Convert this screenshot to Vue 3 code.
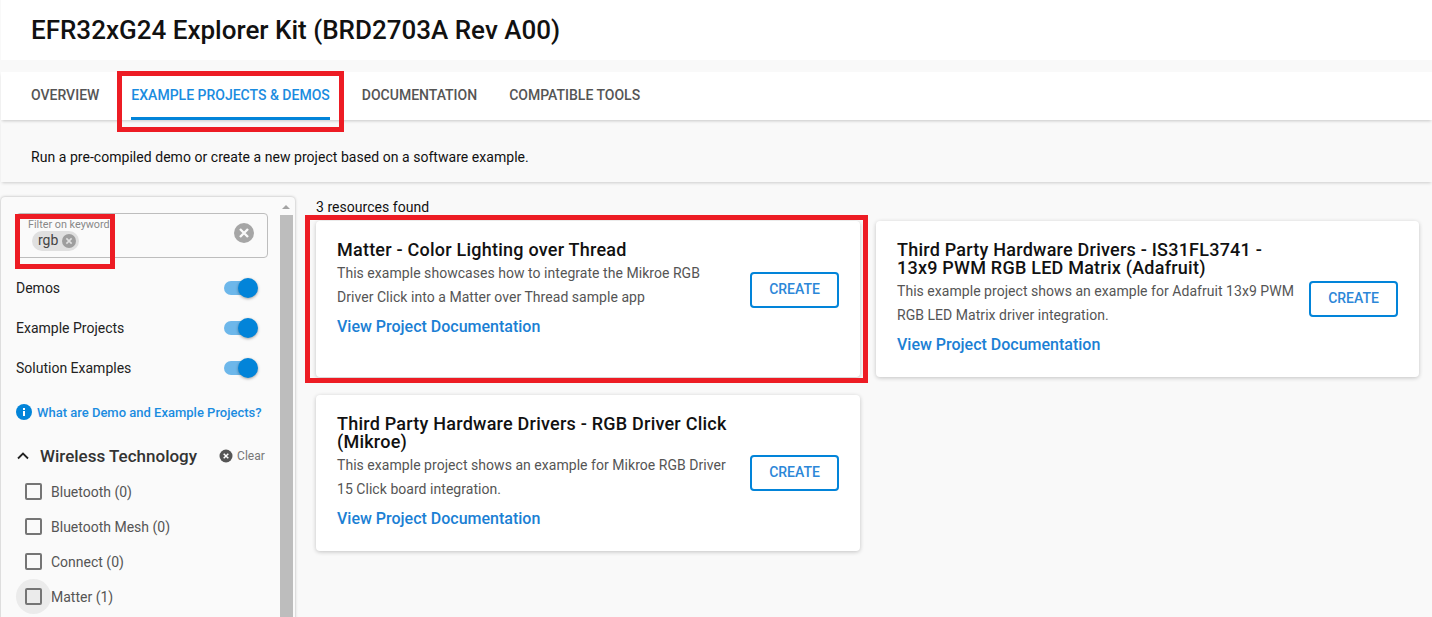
<template>
  <div class="page">
    <header class="title-bar">
      <h1>EFR32xG24 Explorer Kit (BRD2703A Rev A00)</h1>
    </header>

    <nav class="tabs">
      <a v-for="tab in tabs" :key="tab" class="tab" :class="{ active: tab === activeTab }">{{ tab }}</a>
    </nav>

    <p class="intro">Run a pre-compiled demo or create a new project based on a software example.</p>

    <div class="content">
      <aside class="sidebar">
        <div class="filters">
          <div class="keyword-box">
            <span class="keyword-label">Filter on keyword</span>
            <span class="chip">
              rgb
              <svg class="chip-x" viewBox="0 0 16 16">
                <circle cx="8" cy="8" r="8" fill="#9e9e9e" />
                <path d="M5 5l6 6M11 5l-6 6" stroke="#e0e0e0" stroke-width="1.8" />
              </svg>
            </span>
            <svg class="clear-all" viewBox="0 0 20 20">
              <circle cx="10" cy="10" r="10" fill="#a6a6a6" />
              <path d="M6 6l8 8M14 6l-8 8" stroke="#fafafa" stroke-width="2.4" />
            </svg>
          </div>

          <div v-for="toggle in toggles" :key="toggle" class="toggle-row">
            <span>{{ toggle }}</span>
            <span class="switch"><span class="knob"></span></span>
          </div>

          <a class="help-link">
            <svg viewBox="0 0 16 16" class="info">
              <circle cx="8" cy="8" r="8" fill="#0284d9" />
              <rect x="7" y="7" width="2" height="5" fill="#fff" />
              <rect x="7" y="4" width="2" height="2" fill="#fff" />
            </svg>
            What are Demo and Example Projects?
          </a>

          <div class="group-head">
            <svg class="chevron" viewBox="0 0 12 8">
              <path d="M1 6.5l5-5 5 5" fill="none" stroke="#222" stroke-width="1.8" />
            </svg>
            <span class="group-title">Wireless Technology</span>
            <span class="clear">
              <svg viewBox="0 0 14 14" class="clear-icon">
                <circle cx="7" cy="7" r="6.5" fill="#555" />
                <path d="M4.7 4.7l4.6 4.6M9.3 4.7l-4.6 4.6" stroke="#fff" stroke-width="1.5" />
              </svg>
              Clear
            </span>
          </div>

          <label v-for="item in technologies" :key="item.name" class="check-row">
            <span class="check-wrap" :class="{ hover: item.hover }"><span class="box"></span></span>
            {{ item.name }} ({{ item.count }})
          </label>
        </div>

        <div class="scrollbar">
          <span class="arrow"></span>
          <span class="thumb"></span>
        </div>
      </aside>

      <main class="results">
        <div class="found">3 resources found</div>
        <div class="cards">
          <article v-for="card in cards" :key="card.title" class="card">
            <div class="card-body">
              <div class="card-text">
                <h3 :style="{ maxWidth: card.titleWidth }">{{ card.title }}</h3>
                <p>{{ card.text }}</p>
                <a class="doc-link">View Project Documentation</a>
              </div>
              <button class="create">CREATE</button>
            </div>
          </article>
        </div>
      </main>
    </div>

    <!-- red callouts drawn on top of the screenshot -->
    <span class="callout callout-tab"></span>
    <span class="callout callout-filter"></span>
    <span class="callout callout-card"></span>
  </div>
</template>

<script setup>
const tabs = ['OVERVIEW', 'EXAMPLE PROJECTS & DEMOS', 'DOCUMENTATION', 'COMPATIBLE TOOLS']
const activeTab = 'EXAMPLE PROJECTS & DEMOS'

const toggles = ['Demos', 'Example Projects', 'Solution Examples']

const technologies = [
  { name: 'Bluetooth', count: 0 },
  { name: 'Bluetooth Mesh', count: 0 },
  { name: 'Connect', count: 0 },
  { name: 'Matter', count: 1, hover: true }
]

const cards = [
  {
    title: 'Matter - Color Lighting over Thread',
    text: 'This example showcases how to integrate the Mikroe RGB Driver Click into a Matter over Thread sample app',
    titleWidth: '380px'
  },
  {
    title: 'Third Party Hardware Drivers - IS31FL3741 - 13x9 PWM RGB LED Matrix (Adafruit)',
    text: 'This example project shows an example for Adafruit 13x9 PWM RGB LED Matrix driver integration.',
    titleWidth: '385px'
  },
  {
    title: 'Third Party Hardware Drivers - RGB Driver Click (Mikroe)',
    text: 'This example project shows an example for Mikroe RGB Driver 15 Click board integration.',
    titleWidth: '396px'
  }
]
</script>

<style>
html,
body {
  margin: 0;
  overflow: hidden;
  background: #f9f9f9;
}
</style>

<style scoped>
.page {
  position: relative;
  height: 617px;
  overflow: hidden;
  background: #f9f9f9;
  padding-left: 1px;
  font-family: Roboto, "Liberation Sans", sans-serif;
  color: #333;
  box-sizing: border-box;
}

.title-bar {
  height: 60px;
  background: #fff;
  padding-left: 30px;
  display: flex;
  align-items: center;
}

.title-bar h1 {
  margin: 0;
  font-size: 26px;
  font-weight: 500;
  color: #111;
}

.tabs {
  margin-top: 12px;
  height: 48px;
  background: #fff;
  padding-left: 30px;
  display: flex;
  gap: 32px;
  box-shadow: 0 2px 3px -1px rgba(0, 0, 0, 0.2);
  position: relative;
}

.tab {
  height: 45px;
  line-height: 46px;
  font-size: 14px;
  font-weight: 500;
  color: #555;
}

.tab.active {
  color: #1a8ce0;
  border-bottom: 3px solid #0284d9;
}

.intro {
  margin: 0;
  height: 62px;
  line-height: 74px;
  padding-left: 30px;
  font-size: 14px;
  letter-spacing: 0.04px;
  color: #111;
  box-sizing: border-box;
  box-shadow: 0 2px 3px -1px rgba(0, 0, 0, 0.18);
}

.content {
  display: flex;
  margin-top: 15px;
}

.sidebar {
  width: 294px;
  height: 440px;
  flex-shrink: 0;
  display: flex;
  background: #fafafa;
  border-radius: 4px 4px 0 0;
  box-shadow: 0 0 3px rgba(0, 0, 0, 0.3);
}

.filters {
  width: 264px;
  padding: 16px 0 0 15px;
  flex-shrink: 0;
}

.keyword-box {
  position: relative;
  width: 252px;
  height: 45px;
  border: 1px solid #bdbdbd;
  border-radius: 4px;
  box-sizing: border-box;
}

.keyword-label {
  position: absolute;
  left: 11px;
  top: 4px;
  font-size: 10.8px;
  color: #888;
}

.chip {
  position: absolute;
  left: 15px;
  top: 17px;
  height: 20px;
  width: 47px;
  padding-left: 6px;
  box-sizing: border-box;
  background: #e0e0e0;
  border-radius: 10px;
  font-size: 14px;
  line-height: 19px;
  color: #444;
}

.chip-x {
  position: absolute;
  right: 3px;
  top: 3px;
  width: 14px;
  height: 14px;
}

.clear-all {
  position: absolute;
  right: 13px;
  top: 9px;
  width: 20px;
  height: 20px;
}

.toggle-row {
  width: 241px;
  height: 40px;
  display: flex;
  align-items: center;
  justify-content: space-between;
  font-size: 14px;
  color: #222;
}

.keyword-box + .toggle-row {
  margin-top: 10px;
}

.switch {
  position: relative;
  width: 33px;
  height: 14px;
  border-radius: 7px;
  background: #6db7ea;
}

.knob {
  position: absolute;
  right: -1px;
  top: -3px;
  width: 20px;
  height: 20px;
  border-radius: 50%;
  background: #0284d9;
  box-shadow: 0 1px 3px rgba(0, 0, 0, 0.35);
}

.help-link {
  display: flex;
  align-items: center;
  gap: 5px;
  margin-top: 16px;
  font-size: 13px;
  font-weight: 500;
  color: #1a8ce0;
  white-space: nowrap;
}

.info {
  width: 16px;
  height: 16px;
}

.group-head {
  display: flex;
  align-items: center;
  margin-top: 24px;
  height: 24px;
}

.chevron {
  width: 12px;
  height: 8px;
  margin-left: 1px;
}

.group-title {
  margin-left: 11px;
  font-size: 17px;
  font-weight: 500;
  color: #333;
  white-space: nowrap;
}

.clear {
  display: flex;
  align-items: center;
  gap: 4px;
  margin-left: 22px;
  font-size: 12px;
  color: #777;
}

.clear-icon {
  width: 14px;
  height: 14px;
}

.check-row {
  display: flex;
  align-items: center;
  height: 35px;
  font-size: 14px;
  color: #555;
  white-space: nowrap;
}

.group-head + .check-row {
  margin-top: 6px;
}

.check-wrap {
  width: 35px;
  height: 35px;
  flex-shrink: 0;
  display: flex;
  align-items: center;
  justify-content: center;
  border-radius: 50%;
}

.check-wrap.hover {
  background: #ebebeb;
}

.box {
  width: 17px;
  height: 17px;
  border: 2px solid #757575;
  border-radius: 2px;
  box-sizing: border-box;
}

.scrollbar {
  width: 15px;
  display: flex;
  flex-direction: column;
}

.arrow {
  margin: 8px 0 0 2px;
  width: 0;
  height: 0;
  border-left: 4px solid transparent;
  border-right: 4px solid transparent;
  border-bottom: 4px solid #a3a3a3;
}

.thumb {
  margin-top: 6px;
  flex: 1;
  width: 13px;
  background: #bdbdbd;
}

.results {
  flex: 1;
  padding-left: 21px;
  min-width: 0;
}

.found {
  height: 22px;
  margin-top: 2px;
  font-size: 14px;
  line-height: 17px;
  letter-spacing: 0.03px;
  color: #111;
}

.cards {
  display: grid;
  grid-template-columns: 544px 543px;
  gap: 18px 16px;
  align-items: start;
}

.card {
  height: 156px;
  background: #fff;
  border-radius: 4px;
  box-shadow: 0 1px 4px rgba(0, 0, 0, 0.22);
  padding: 20px 21px 0;
  box-sizing: border-box;
}

.card-body {
  display: flex;
  align-items: center;
  justify-content: space-between;
}

.card-text {
  width: 400px;
  flex-shrink: 0;
}

.card h3 {
  margin: 0 0 2px;
  font-size: 18px;
  line-height: 18px;
  font-weight: 500;
  letter-spacing: 0.23px;
  color: #111;
}

.card p {
  margin: 0;
  font-size: 14px;
  line-height: 24px;
  letter-spacing: 0.04px;
  color: #555;
}

.doc-link {
  display: block;
  margin-top: 7px;
  font-size: 16px;
  font-weight: 500;
  line-height: 22px;
  color: #1b80d4;
}

.create {
  width: 89px;
  height: 36px;
  background: #fff;
  border: 2px solid #0284d9;
  border-radius: 4px;
  font-family: inherit;
  font-size: 14px;
  font-weight: 500;
  color: #2c87d8;
  padding: 0 0 2px;
}

.callout {
  position: absolute;
  border: 5px solid #ed1c24;
  box-sizing: border-box;
  pointer-events: none;
}

.callout-tab {
  left: 117px;
  top: 71px;
  width: 227px;
  height: 61px;
}

.callout-filter {
  left: 15px;
  top: 214px;
  width: 100px;
  height: 55px;
}

.callout-card {
  left: 305px;
  top: 215px;
  width: 563px;
  height: 168px;
}
</style>
